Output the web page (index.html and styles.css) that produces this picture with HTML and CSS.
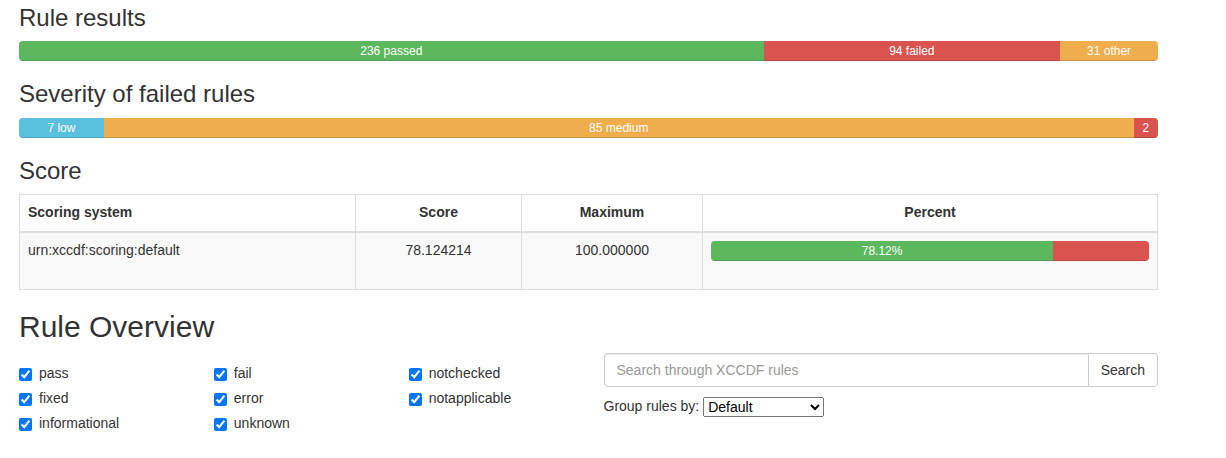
FILE: index.html
```html
<!DOCTYPE html>
<html lang="en">
<head>
<meta charset="utf-8">
<title>Rule results</title>
<link rel="stylesheet" href="styles.css">
</head>
<body>
<div class="container">
  <h3 class="heading first">Rule results</h3>
  <div class="progress">
    <div class="bar bar-success" style="width: 65.37%">236 passed</div>
    <div class="bar bar-danger" style="width: 26.04%">94 failed</div>
    <div class="bar bar-warning" style="width: 8.59%">31 other</div>
  </div>

  <h3 class="heading">Severity of failed rules</h3>
  <div class="progress">
    <div class="bar bar-info" style="width: 7.45%">7 low</div>
    <div class="bar bar-warning" style="width: 90.42%">85 medium</div>
    <div class="bar bar-danger" style="width: 2.13%">2</div>
  </div>

  <h3 class="heading">Score</h3>
  <table class="score-table">
    <thead>
      <tr>
        <th class="col-system">Scoring system</th>
        <th class="col-score center">Score</th>
        <th class="col-max center">Maximum</th>
        <th class="col-percent center">Percent</th>
      </tr>
    </thead>
    <tbody>
      <tr>
        <td>urn:xccdf:scoring:default</td>
        <td class="center">78.124214</td>
        <td class="center">100.000000</td>
        <td>
          <div class="progress">
            <div class="bar bar-success" style="width: 78.12%">78.12%</div>
            <div class="bar bar-danger" style="width: 21.88%"></div>
          </div>
        </td>
      </tr>
    </tbody>
  </table>

  <h2 class="heading big">Rule Overview</h2>
  <div class="overview">
    <div class="filters">
      <div class="filter-col">
        <label class="check"><input type="checkbox" checked> pass</label>
        <label class="check"><input type="checkbox" checked> fixed</label>
        <label class="check"><input type="checkbox" checked> informational</label>
      </div>
      <div class="filter-col">
        <label class="check"><input type="checkbox" checked> fail</label>
        <label class="check"><input type="checkbox" checked> error</label>
        <label class="check"><input type="checkbox" checked> unknown</label>
      </div>
      <div class="filter-col">
        <label class="check"><input type="checkbox" checked> notchecked</label>
        <label class="check"><input type="checkbox" checked> notapplicable</label>
      </div>
    </div>
    <div class="search-col">
      <div class="input-group">
        <input class="search-input" type="text" placeholder="Search through XCCDF rules">
        <button class="search-btn" type="button">Search</button>
      </div>
      <div class="group-by">
        <span>Group rules by:</span>
        <select class="group-select">
          <option>Default</option>
        </select>
      </div>
    </div>
  </div>
</div>
</body>
</html>
```

FILE: styles.css
```css
html, body {
  margin: 0;
  padding: 0;
  background: #fff;
}

body {
  font-family: "Liberation Sans", Arial, Helvetica, sans-serif;
  font-size: 14px;
  line-height: 1.42857;
  color: #333;
}

.container {
  width: 1139px;
  padding-left: 19px;
}

.heading {
  font-family: "Liberation Sans", Arial, Helvetica, sans-serif;
  font-weight: 500;
  line-height: 1.1;
  color: #333;
  font-size: 24px;
  margin: 20px 0 10px;
}

.heading.first {
  margin-top: 5px;
}

.heading.big {
  font-size: 30px;
}

.progress {
  display: flex;
  height: 20px;
  margin-bottom: 20px;
  overflow: hidden;
  background-color: #f5f5f5;
  border-radius: 4px;
  box-shadow: inset 0 1px 2px rgba(0, 0, 0, .1);
}

.bar {
  height: 100%;
  font-size: 12px;
  line-height: 20px;
  color: #fff;
  text-align: center;
  white-space: nowrap;
  box-shadow: inset 0 -1px 0 rgba(0, 0, 0, .15);
}

.bar-success { background-color: #5cb85c; }
.bar-danger { background-color: #d9534f; }
.bar-warning { background-color: #f0ad4e; }
.bar-info { background-color: #5bc0de; }

.score-table {
  width: 100%;
  border-collapse: collapse;
  border-spacing: 0;
  margin-bottom: 20px;
  border: 1px solid #ddd;
}

.score-table th,
.score-table td {
  padding: 8px;
  line-height: 1.42857;
  vertical-align: top;
  border: 1px solid #ddd;
  text-align: left;
}

.score-table th {
  font-weight: bold;
  vertical-align: bottom;
  border-bottom-width: 2px;
}

.score-table tbody tr {
  background-color: #f9f9f9;
}

.score-table .center {
  text-align: center;
}

.col-system { width: 319px; }
.col-score { width: 149px; }
.col-max { width: 164px; }

.overview {
  display: grid;
  grid-template-columns: 1fr 1fr;
  column-gap: 30px;
}

.filters {
  display: grid;
  grid-template-columns: 1fr 1fr 1fr;
  column-gap: 30px;
  padding-top: 11px;
}

.filter-col {
  display: flex;
  flex-direction: column;
  gap: 5px;
}

.check {
  position: relative;
  display: block;
  min-height: 20px;
  padding-left: 20px;
  cursor: pointer;
}

.check input {
  position: absolute;
  left: 0;
  top: 0;
  margin: 4px 0 0;
  width: 13px;
  height: 13px;
}

.input-group {
  display: flex;
  height: 34px;
}

.search-input {
  flex: 1;
  min-width: 0;
  height: 34px;
  box-sizing: border-box;
  padding: 6px 12px;
  font-family: inherit;
  font-size: 14px;
  color: #555;
  border: 1px solid #ccc;
  border-right: 0;
  border-radius: 4px 0 0 4px;
  box-shadow: inset 0 1px 1px rgba(0, 0, 0, .075);
  outline: none;
}

.search-input::placeholder {
  color: #999;
}

.search-btn {
  height: 34px;
  box-sizing: border-box;
  padding: 6px 12px;
  font-family: inherit;
  font-size: 14px;
  color: #333;
  background: #fff;
  border: 1px solid #ccc;
  border-radius: 0 4px 4px 0;
}

.group-by {
  margin-top: 10px;
  display: flex;
  align-items: center;
  gap: 4px;
}

.group-select {
  width: 121px;
  height: 20px;
  font-family: inherit;
  font-size: 14px;
  color: #000;
}
```
